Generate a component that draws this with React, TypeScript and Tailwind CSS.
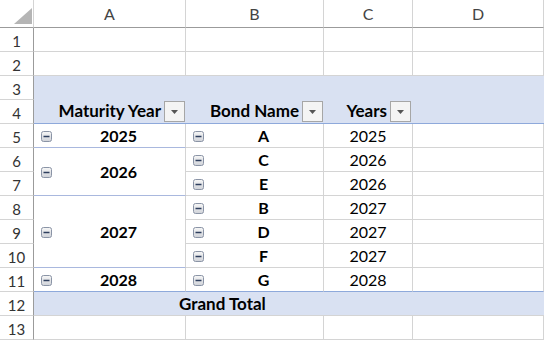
import React from 'react';

const cols = ['A', 'B', 'C', 'D'];

function Minus() {
    return (
        <svg width="11" height="11" viewBox="0 0 11 11" className="shrink-0">
            <defs>
                <linearGradient id="mg" x1="0" y1="0" x2="0" y2="1">
                    <stop offset="0" stopColor="#f7f7f7" />
                    <stop offset="1" stopColor="#cfd2d8" />
                </linearGradient>
            </defs>
            <rect x="0.5" y="0.5" width="10" height="10" rx="2" fill="url(#mg)" stroke="#8a94a6" />
            <rect x="2.5" y="4.75" width="6" height="1.5" fill="#2e3f5e" />
        </svg>
    );
}

function Dropdown() {
    return (
        <div className="flex h-[21px] w-[21px] shrink-0 items-center justify-center border border-[#a6a6a6] bg-[#f4f4f4]">
            <svg width="7" height="4" viewBox="0 0 7 4" className="mt-[1px]">
                <path d="M0 0h7L3.5 4z" fill="#555" />
            </svg>
        </div>
    );
}

function RowNum({ n }: { n: number }) {
    return (
        <div className="flex justify-center border-r border-b border-r-[#9b9b9b] border-b-[#d4d4d4] pt-[1px] text-[15px] leading-[24px] text-[#333]">
            {n}
        </div>
    );
}

function Empty({ blue }: { blue?: boolean }) {
    return <div className={blue ? 'border-r border-b border-r-[#d4d4d4] border-b-[#8ea9db]' : 'border-r border-b border-[#d4d4d4]'} />;
}

function YearCell({ year, span, last }: { year: string; span: 1 | 2 | 3; last?: boolean }) {
    const rs = span === 1 ? '' : span === 2 ? 'row-span-2' : 'row-span-3';
    return (
        <div className={`${rs} flex items-center border-r border-b border-r-[#d4d4d4] ${last ? 'border-b-[#8ea9db]' : 'border-b-[#a9b8de]'} pt-[2px] pl-[7px]`}>
            <Minus />
            <span className="flex-1 text-center text-[16px] font-bold leading-[24px] -mt-[2px]">{year}</span>
        </div>
    );
}

function BondCell({ name, last }: { name: string; last?: boolean }) {
    return (
        <div className={`flex items-center border-r border-b border-r-[#d4d4d4] ${last ? 'border-b-[#8ea9db]' : 'border-b-[#d4d4d4]'} pt-[2px] pl-[7px]`}>
            <Minus />
            <span className="flex-1 text-center text-[16px] font-bold leading-[24px] -mt-[2px]">{name}</span>
        </div>
    );
}

function ValCell({ v, last }: { v: string; last?: boolean }) {
    return (
        <div className={`border-r border-b border-r-[#d4d4d4] ${last ? 'border-b-[#8ea9db]' : 'border-b-[#d4d4d4]'} text-center text-[16px] leading-[24px]`}>
            {v}
        </div>
    );
}

function HeadLabel({ label, pr }: { label: string; pr: string }) {
    return (
        <div className={`flex items-end justify-end gap-[3px] border-b border-b-[#8ea9db] bg-[#d9e1f2] pb-[1px] ${pr}`}>
            <span className="text-[17px] font-bold leading-[24px] -mb-[1px]">{label}</span>
            <Dropdown />
        </div>
    );
}

const rows: { bond: string; year: string }[] = [
    { bond: 'A', year: '2025' },
    { bond: 'C', year: '2026' },
    { bond: 'E', year: '2026' },
    { bond: 'B', year: '2027' },
    { bond: 'D', year: '2027' },
    { bond: 'F', year: '2027' },
    { bond: 'G', year: '2028' },
];

const groups: Record<number, { year: string; span: 1 | 2 | 3 }> = {
    0: { year: '2025', span: 1 },
    1: { year: '2026', span: 2 },
    3: { year: '2027', span: 3 },
    6: { year: '2028', span: 1 },
};

export default function App() {
    return (
        <div className="h-[340px] w-[544px] overflow-hidden bg-white font-['Lato',sans-serif] text-black">
            <div className="grid grid-cols-[34px_152px_138px_89px_131px] grid-rows-[28px_repeat(13,24px)]">
                {/* header row */}
                <div className="flex items-start justify-end border-r border-b border-r-[#d4d4d4] border-b-[#9b9b9b] pt-[8px] pr-[1px]">
                    <svg width="18" height="16" viewBox="0 0 18 16">
                        <path d="M18 0V16H0z" fill="#b5b5b5" />
                    </svg>
                </div>
                {cols.map((c) => (
                    <div key={c} className="border-r border-b border-r-[#d4d4d4] border-b-[#9b9b9b] pt-[2px] text-center text-[16px] leading-[24px] text-[#444]">
                        {c}
                    </div>
                ))}

                {/* rows 1-2 */}
                {[1, 2].map((n) => (
                    <React.Fragment key={n}>
                        <RowNum n={n} />
                        <Empty />
                        <Empty />
                        <Empty />
                        <Empty />
                    </React.Fragment>
                ))}

                {/* pivot header */}
                <RowNum n={3} />
                <div className="col-span-4 bg-[#d9e1f2]" />
                <RowNum n={4} />
                <HeadLabel label="Maturity Year" pr="pr-[1px]" />
                <HeadLabel label="Bond Name" pr="pr-[1px]" />
                <HeadLabel label="Years" pr="pr-[2px]" />
                <div className="border-b border-b-[#8ea9db] bg-[#d9e1f2]" />

                {/* data */}
                {rows.map((r, i) => {
                    const last = i === rows.length - 1;
                    const g = groups[i];
                    return (
                        <React.Fragment key={r.bond}>
                            <RowNum n={i + 5} />
                            {g && <YearCell year={g.year} span={g.span} last={last} />}
                            <BondCell name={r.bond} last={last} />
                            <ValCell v={r.year} last={last} />
                            <Empty blue={last} />
                        </React.Fragment>
                    );
                })}

                {/* grand total */}
                <RowNum n={12} />
                <div className="col-span-4 border-b border-b-[#d4d4d4] bg-[#d9e1f2] pl-[145px] text-[17px] font-bold leading-[24px]">
                    Grand Total
                </div>

                <RowNum n={13} />
                <Empty />
                <Empty />
                <Empty />
                <Empty />
            </div>
        </div>
    );
}
